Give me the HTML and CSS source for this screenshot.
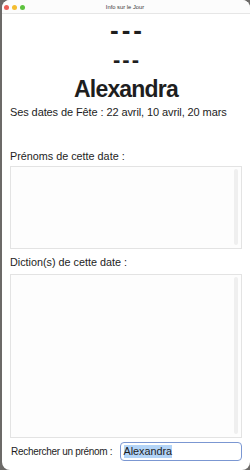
FILE: index.html
```html
<!DOCTYPE html>
<html lang="fr">
<head>
<meta charset="utf-8">
<link rel="stylesheet" href="styles.css">
</head>
<body>
<div class="window">
  <div class="titlebar">
    <div class="lights">
      <span class="light red"></span>
      <span class="light yellow"></span>
      <span class="light green"></span>
    </div>
    <div class="title">Info sur le Jour</div>
  </div>
  <div class="content">
    <div class="big dash1">---</div>
    <div class="big dash2">---</div>
    <div class="big name">Alexandra</div>
    <div class="dates">Ses dates de Fête : 22 avril, 10 avril, 20 mars</div>
    <div class="label l1">Prénoms de cette date :</div>
    <div class="box box1"><div class="track"></div></div>
    <div class="label l2">Diction(s) de cette date :</div>
    <div class="box box2"><div class="track"></div></div>
    <div class="search">
      <span class="slabel">Rechercher un prénom :</span>
      <div class="input"><span class="sel">Alexandra</span></div>
    </div>
  </div>
</div>
</body>
</html>
```
FILE: styles.css
```css
html, body { margin: 0; padding: 0; }
body {
  width: 250px; height: 470px;
  background: #6c6a68;
  font-family: "Liberation Sans", Arial, sans-serif;
  color: #1d1d1d;
  overflow: hidden;
}
.window {
  margin-left: 2px;
  width: 248px; height: 470px;
  background: #ffffff;
  border-radius: 8px;
  overflow: hidden;
  display: flex; flex-direction: column;
}
.titlebar {
  height: 13px;
  border-bottom: 1px solid #e6e6e6;
  background: #fcfcfc;
  position: relative;
  display: flex; align-items: center; justify-content: center;
}
.lights { position: absolute; left: 2px; top: 5px; display: flex; gap: 3px; }
.light { width: 5px; height: 5px; border-radius: 50%; display: block; }
.red { background: #ec5f57; }
.yellow { background: #f4bd30; }
.green { background: #5ec33f; }
.title { font-size: 5.8px; color: #3a3a3a; margin-left: -2px; }
.content {
  flex: 1;
  padding: 0 8px 0 8px;
  display: flex; flex-direction: column;
}
.big { text-align: center; font-weight: 700; color: #1e1e1e; }
.dash1 { margin-top: 2px; height: 28px; font-size: 26px; line-height: 28px; letter-spacing: 3px; padding-left: 3px; }
.dash2 { margin-top: 5px; height: 22px; font-size: 22px; line-height: 22px; letter-spacing: 2px; padding-left: 2px; }
.name { margin-top: 6px; height: 24px; font-size: 23px; line-height: 24px; letter-spacing: -0.8px; }
.dates { font-size: 11px; letter-spacing: -0.1px; line-height: 13px; margin-top: 5px; white-space: nowrap; }
.label { font-size: 10.8px; line-height: 13px; white-space: nowrap; }
.l1 { margin-top: 31px; }
.l2 { margin-top: 7px; }
.box {
  margin-top: 3px;
  border: 1px solid #e3e3e3;
  background: #fdfdfd;
  position: relative;
  box-sizing: border-box;
}
.box1 { height: 83px; }
.box2 { height: 164px; margin-top: 5px; }
.track {
  position: absolute; right: 3px; top: 2px; bottom: 3px;
  width: 4px; background: #efefef; border-radius: 2px;
}
.search {
  margin-top: 4px;
  display: flex; align-items: center; justify-content: space-between;
}
.slabel { font-size: 10px; letter-spacing: -0.3px; padding-left: 1px; white-space: nowrap; }
.input {
  flex-shrink: 0;
  width: 122px; height: 19px; box-sizing: border-box;
  border: 1.5px solid #7b97d2; border-radius: 4px;
  font-size: 10.8px; padding-left: 2.5px;
  display: flex; align-items: center;
}
.sel { background: #b3d4f7; line-height: 13px; }
```
